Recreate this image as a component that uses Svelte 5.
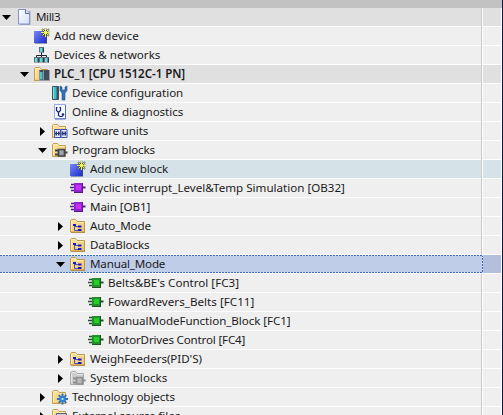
<script>
  const rows = [
    { level: 0, icon: 'page', text: 'Mill3', arrow: 'down', tone: 'dark', ls: -0.4 },
    { level: 1, icon: 'add', text: 'Add new device', ls: 0 },
    { level: 1, icon: 'network', text: 'Devices & networks', ls: 0 },
    { level: 1, icon: 'plc', text: 'PLC_1 [CPU 1512C-1 PN]', arrow: 'down', tone: 'dark', bold: true, ls: -0.07 },
    { level: 2, icon: 'config', text: 'Device configuration', ls: -0.05 },
    { level: 2, icon: 'diag', text: 'Online & diagnostics', ls: -0.05 },
    { level: 2, icon: 'units', text: 'Software units', arrow: 'right', ls: -0.16 },
    { level: 2, icon: 'program', text: 'Program blocks', arrow: 'down', ls: -0.15 },
    { level: 3, icon: 'add', text: 'Add new block', tone: 'hover', ls: -0.08 },
    { level: 3, icon: 'ob', text: 'Cyclic interrupt_Level&Temp Simulation [OB32]', ls: 0 },
    { level: 3, icon: 'ob', text: 'Main [OB1]', ls: -0.08 },
    { level: 3, icon: 'group', text: 'Auto_Mode', arrow: 'right', ls: -0.15 },
    { level: 3, icon: 'group', text: 'DataBlocks', arrow: 'right', ls: -0.1 },
    { level: 3, icon: 'group', text: 'Manual_Mode', arrow: 'down', tone: 'selected', ls: -0.18 },
    { level: 4, icon: 'fc', text: "Belts&BE's Control [FC3]", ls: 0 },
    { level: 4, icon: 'fc', text: 'FowardRevers_Belts [FC11]', ls: 0.03 },
    { level: 4, icon: 'fc', text: 'ManualModeFunction_Block [FC1]', ls: -0.06 },
    { level: 4, icon: 'fc', text: 'MotorDrives Control [FC4]', ls: -0.18 },
    { level: 3, icon: 'group', text: "WeighFeeders(PID'S)", arrow: 'right', ls: -0.05 },
    { level: 3, icon: 'system', text: 'System blocks', arrow: 'right', ls: 0.04 },
    { level: 2, icon: 'tech', text: 'Technology objects', arrow: 'right', ls: -0.07 },
    { level: 2, icon: 'external', text: 'External source files', arrow: 'right', ls: -0.05 }
  ];
</script>

{#snippet folder(grey)}
  <path d="M.5 14.5V2.5l1-1h4l1.5 2h6.5v11z" fill={grey ? '#cdcdcd' : 'url(#folder)'} stroke={grey ? '#a9a9a9' : '#c49c4c'} />
  <path d="M1.500 13V3.500M2 2.500h3.500l1.500 2h6" fill="none" stroke={grey ? '#e4e4e4' : '#fff0bd'} />
{/snippet}

{#snippet chip(main, dark, light)}
  <path d="M1 4.500h4M0 7.500h5M1 10.500h4" stroke={dark} stroke-width="1.600" />
  <path d="M12 7.500h3.500" stroke={dark} stroke-width="2" />
  <path d="M4 3h9v10H4z" fill={dark} />
  <path d="M4 3h8v9H4z" fill={main} />
  <path d="M6 5h5v5H6z" fill={light} />
{/snippet}

{#snippet icon(name)}
  <svg class="icon" viewBox="0 0 16 16" width="16" height="16">
    {#if name === 'page'}
      <path d="M4 2h10.500v14H4z" fill="#a9aebb" />
      <path d="M2.500.5h7l4 4v10.500h-11z" fill="url(#paper)" stroke="#8492c8" />
      <path d="M9.500.5v4h4" fill="#e3e8fb" stroke="#5668b0" />
    {:else if name === 'add'}
      <path d="M1 4h12v11.500H1z" fill="#3e4777" />
      <path d="M0 3h12v12H0z" fill="url(#blue)" />
      <path d="M11.500 0v9M7 4.500h9M8 1l7 7M15 1L8 8" stroke="#4e512a" stroke-width="1.700" />
      <path d="M11.500 0v9M7 4.500h9M8.500 1.500l6 6M14.500 1.500l-6 6" stroke="#ffff60" stroke-width=".9" />
    {:else if name === 'network'}
      <path d="M7.500 5v4M2.500 11V8.500h10V11M7.500 8v3" fill="none" stroke="#20232d" />
      {#each [[5, 0], [0, 10], [5, 10], [10, 10]] as p}
        <rect x={p[0] + 0.5} y={p[1] + 0.5} width="4" height="4.500" fill="#7a8590" stroke="#606d7a" />
        <path d="M{p[0] + 1} {p[1] + 1}h2v4h-2z" fill="#4fe0e0" />
        <path d="M{p[0] + 4.5} {p[1] + 1}v4.500" stroke="#303947" />
      {/each}
    {:else if name === 'plc'}
      {@render folder(false)}
      <path d="M5 4h11v11H5z" fill="#9a9fa8" />
      <path d="M5 4h10v10H5z" fill="#404b5b" />
      <path d="M6 6h2.500v7.500H6z" fill="#49c6c8" />
      <path d="M9.500 4.500v9.500M5.500 4.500v9.500" stroke="#8795a0" />
    {:else if name === 'config'}
      <path d="M.5 1.500h6v13h-6z" fill="#35c3c3" stroke="#3f5060" />
      <path d="M1.500 2v12" stroke="#8fdede" />
      <path d="M5.500 2v12" stroke="#43505e" stroke-width="2" />
      <path d="M8 1v4.500L10 8v7h3V8l2-2.500V1l-2 1v3h-3V2z" fill="#3470b5" stroke="#20508c" stroke-width=".6" />
    {:else if name === 'diag'}
      <path d="M2.500.5h11v14h-11z" fill="#f5f7ff" stroke="#9baae6" />
      <path d="M13.500 1v14H3" fill="none" stroke="#536bc1" />
      <path d="M5.500 3.500h-1v3l2 2 2-2v-3h-1M6.500 8.500v3l1.500 1h2l1-1" fill="none" stroke="#1c2670" stroke-width="1.200" />
      <circle cx="11" cy="10.500" r="1.200" fill="#1c2670" />
    {:else if name === 'units'}
      {@render folder(false)}
      {#each [2, 8.5] as x}
        <path d="M{x + 0.5} 6.500h6v8h-6z" fill="#e8eaf6" stroke="#3f55b4" />
        <path d="M{x + 1} 10.500h5" stroke="#28377c" />
        <path d="M{x + 1.5} 8.500h1.500v4H{x + 1.5}zM{x + 4} 8.500h1.500v4H{x + 4}z" fill="#28377c" />
      {/each}
    {:else if name === 'program' || name === 'system'}
      {@render folder(name === 'system')}
      <g stroke={name === 'system' ? '#8e8e8e' : '#3f444d'} fill={name === 'system' ? '#b9b9b9' : '#a0a6ae'}>
        <path d="M3 8.500h4M3 12.500h4M12 10.500h3.500" stroke-width="2" />
        <path d="M6.500 7.500h6v6.500h-6z" stroke-width="1.700" />
      </g>
    {:else if name === 'group'}
      <path d="M1 15V4h14v11z" fill="#a58850" />
      <path d="M.5 14V2.500l1-1h4l1.500 2h7.500V14z" fill="url(#folder)" stroke="#c09746" />
      <path d="M1.500 13V3.500M2 2.500h3.500l1.500 2h6.500" fill="none" stroke="#fff0bd" />
      <path d="M4.500 8v4.500H8M5 8.500h3" fill="none" stroke="#3030c0" stroke-width=".8" />
      <path d="M3 6h3v2H3zM8 7.500h3.500v2H8zM8 11h3.500v2H8z" fill="#1515d8" />
    {:else if name === 'ob'}
      {@render chip('#9424d0', '#561a84', '#c92ffa')}
    {:else if name === 'fc'}
      {@render chip('#258f2b', '#1b5428', '#23d026')}
    {:else if name === 'tech'}
      {@render folder(false)}
      <path d="M10.500 4.500v11M5 10h11M6.700 6.200l7.600 7.600M14.300 6.200l-7.600 7.600" stroke="#286fc4" stroke-width="1.800" />
      <circle cx="10.500" cy="10" r="3.200" fill="#3380d8" />
      <circle cx="10.500" cy="10" r="1.100" fill="#d4e8fc" />
    {:else if name === 'external'}
      {@render folder(false)}
      <path d="M4.500 5.500h10v9h-10z" fill="#cbd0df" stroke="#59617a" />
    {/if}
  </svg>
{/snippet}

<svg class="defs" width="0" height="0">
  <defs>
    <linearGradient id="folder" x2="1" y2="1"><stop stop-color="#fde5a2" /><stop offset="1" stop-color="#edc567" /></linearGradient>
    <linearGradient id="blue" x2="1" y2="1"><stop stop-color="#7788f4" /><stop offset="1" stop-color="#1c2dd0" /></linearGradient>
    <linearGradient id="paper" x2="1" y2="1"><stop stop-color="#ffffff" /><stop offset="1" stop-color="#d5defa" /></linearGradient>
  </defs>
</svg>

<div class="window">
  <div class="content">
    <div class="header"></div>
    {#each rows as row}
      <div class="row {row.tone ?? ''}">
        <div class="name" style:padding-left="{row.level * 18}px">
          <span class="toggle">
            {#if row.arrow === 'down'}
              <svg width="9" height="5" viewBox="0 0 9 5"><path d="M0 0h9L4.500 5z" /></svg>
            {:else if row.arrow === 'right'}
              <svg width="5" height="9" viewBox="0 0 5 9"><path d="M0 0v9l5-4.500z" /></svg>
            {/if}
          </span>
          {@render icon(row.icon)}
          <span class="label" class:bold={row.bold} style:letter-spacing="{row.ls}px">{row.text}</span>
        </div>
        <div class="status"></div>
      </div>
    {/each}
  </div>
  <div class="edge"></div>
</div>

<style>
  .defs { position: absolute; }
  .window { display: flex; width: 503px; height: 415px; overflow: hidden; background: #fff; }
  .content { width: 502px; }
  .edge { width: 1px; background: #101a38; }
  .header { height: 8px; background: #c2c2c2; }
  .row { display: flex; height: 19px; box-sizing: border-box; }
  .name { box-sizing: border-box; width: 482px; height: 19px; display: flex; align-items: flex-start; border-right: 1px solid #c8c8c8; background: linear-gradient(#efefef 18px, #fff 18px); }
  .status { width: 18px; height: 18px; margin-left: 1px; background: #efefef; }
  .dark .name { background: linear-gradient(#e0e0e0 18px, #fff 18px); }
  .dark .status { background: #e0e0e0; }
  .hover .name { background: linear-gradient(#d5e2e8 18px, #fff 18px); }
  .hover .status { background: #d5e2e8; }
  .selected .name {
    width: 483px;
    border-right: 0;
    background:
      repeating-linear-gradient(90deg, #3867cc 0 2px, #e5ecfb 2px 3px) 0 0 / 100% 1px no-repeat,
      repeating-linear-gradient(90deg, #3867cc 0 2px, #e5ecfb 2px 3px) 0 17px / 100% 1px no-repeat,
      repeating-linear-gradient(#3867cc 0 2px, #e5ecfb 2px 3px) 100% 0 / 1px 18px no-repeat,
      linear-gradient(#bfcde9 18px, #fff 18px);
  }
  .selected .status { margin-left: 0; background: #b2c0dd; }
  .toggle { width: 16px; height: 18px; display: flex; align-items: center; justify-content: center; box-sizing: border-box; padding-right: 4px; flex: none; }
  .icon { flex: none; margin-top: 1px; }
  .label { margin-left: 4px; font: 11.6px/18px "Noto Sans", "Open Sans", sans-serif; color: #1b1b22; white-space: pre; }
  .bold { font-weight: 600; }
</style>
